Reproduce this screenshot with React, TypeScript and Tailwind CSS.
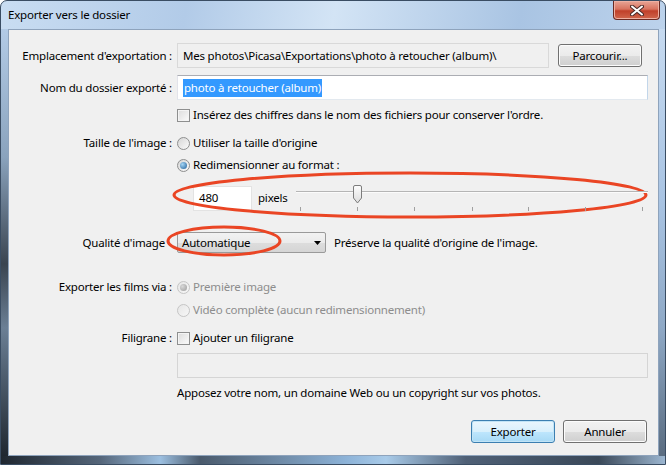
import React from 'react'

const font = "font-['Segoe_UI','Noto_Sans','DejaVu_Sans',sans-serif]"

function Checkbox() {
  return (
    <span className="inline-block w-[13px] h-[13px] border border-[#8e8f8f] bg-[linear-gradient(135deg,#dcdcdc,#fbfbfb)] shadow-[inset_0_0_0_1px_#f4f4f4] shrink-0" />
  )
}

function Radio({ checked, disabled }: { checked?: boolean; disabled?: boolean }) {
  return (
    <span
      className={
        'relative inline-flex items-center justify-center w-[13px] h-[13px] rounded-full border shrink-0 ' +
        (disabled
          ? 'border-[#c5c5c5] bg-[linear-gradient(135deg,#e6e6e6,#f7f7f7)]'
          : 'border-[#8e8f8f] bg-[linear-gradient(135deg,#d6d6d6,#fbfbfb)]')
      }
    >
      {checked && (
        <span
          className={
            'w-[7px] h-[7px] rounded-full ' +
            (disabled
              ? 'bg-[radial-gradient(circle_at_35%_35%,#d8d8d8,#9c9c9c)]'
              : 'bg-[radial-gradient(circle_at_35%_35%,#a5d5f4,#1f5f9a)]')
          }
        />
      )}
    </span>
  )
}

function Row({ label, children, h, mt, labelPad }: { label?: string; children: React.ReactNode; h: number; mt: number; labelPad?: boolean }) {
  return (
    <div className="flex items-center" style={{ height: h, marginTop: mt }}>
      <div className={'w-[163px] text-right whitespace-nowrap ' + (labelPad ? 'pr-[7px]' : '')}>{label}</div>
      <div className="ml-[5px] flex-1 min-w-0 flex items-center h-full">{children}</div>
    </div>
  )
}

function Slider() {
  const ticks = [4, 61, 118, 176, 232, 289, 346]
  return (
    <div className="relative flex-1 h-[26px] ml-[8px]">
      <div className="absolute left-0 right-0 top-[6px] h-[2px] border-t border-[#b5b5b5] bg-[#fbfbfb]" />
      {ticks.map((x) => (
        <div key={x} className="absolute top-[22px] w-px h-[4px] bg-[#a0a0a0]" style={{ left: x }} />
      ))}
      <svg className="absolute left-[56px] top-0" width="11" height="19" viewBox="0 0 11 19">
        <defs>
          <linearGradient id="th" x1="0" x2="0" y1="0" y2="1">
            <stop offset="0" stopColor="#fdfdfd" />
            <stop offset="1" stopColor="#dcdcdc" />
          </linearGradient>
        </defs>
        <path d="M1.5 2 Q1.5 0.5 3 0.5 H8 Q9.5 0.5 9.5 2 V13 L5.5 18 L1.5 13 Z" fill="url(#th)" stroke="#7c7c7c" />
      </svg>
    </div>
  )
}

function Button({ children, focused }: { children: React.ReactNode; focused?: boolean }) {
  return (
    <div
      className={
        'w-[84px] h-[23px] rounded-[3px] border flex items-center justify-center shrink-0 ' +
        (focused
          ? 'border-[#3c7fb1] bg-[linear-gradient(#eaf6fd,#d9f0fc_50%,#bee6fd_51%,#a7d9f5)] shadow-[inset_0_0_0_1px_#c2e4f6]'
          : 'border-[#707070] bg-[linear-gradient(#f2f2f2,#ebebeb_50%,#dddddd_51%,#cfcfcf)] shadow-[inset_0_0_0_1px_#fcfcfc]')
      }
    >
      {children}
    </div>
  )
}

export default function App() {
  return (
    <div className={`w-[666px] h-[465px] ${font} text-[11.5px] tracking-[-0.2px] text-black relative overflow-hidden rounded-t-[7px] border border-[#3a4d63] bg-[linear-gradient(100deg,#c9ddf2,#b2cbe8_25%,#d3e4f5_45%,#a9c4e3_70%,#c6daf0)] flex flex-col`}>
      {/* title bar */}
      <div className="h-[28px] flex items-start justify-between shrink-0">
        <div className="pl-[7px] pt-[6px] text-[11.5px] leading-[16px]">Exporter vers le dossier</div>
        <div className="mr-[5px] w-[47px] h-[19px] rounded-b-[4px] border border-t-0 border-[#6b2a22] bg-[linear-gradient(#e8a596,#d8735f_45%,#c0402a_55%,#d0664c)] shadow-[inset_0_0_0_1px_#eeb0a2] flex items-center justify-center">
          <svg width="14" height="11" viewBox="0 0 14 11">
            <path d="M2 1.5 L12 9.5 M12 1.5 L2 9.5" stroke="#4c2a28" strokeWidth="4" strokeLinecap="round" />
            <path d="M2 1.5 L12 9.5 M12 1.5 L2 9.5" stroke="#ffffff" strokeWidth="2" strokeLinecap="round" />
          </svg>
        </div>
      </div>

      {/* side frames + client */}
      <div className="flex flex-1">
        <div className="w-[7px] bg-[linear-gradient(#b3cbe6,#8aa3bd_30%,#3a4450_55%,#6b7f95_70%,#1f2730)]" />
        <div className="relative w-[651px] h-[427px] border border-[#8ea3bc] bg-[#f0f0f0] pr-[10px]">
          {/* ellipses overlay */}
          <svg className="absolute left-0 top-0 pointer-events-none" width="651" height="427">
            <ellipse cx="401" cy="165" rx="236" ry="22" fill="none" stroke="#ea4524" strokeWidth="3" />
            <ellipse cx="215" cy="211" rx="56" ry="14" fill="none" stroke="#ea4524" strokeWidth="3" />
          </svg>

          <Row label="Emplacement d'exportation :" h={25} mt={13}>
            <div className="w-[372px] h-full border border-[#d9d9d9] bg-[#f0f0f0] flex items-center pl-[5px] whitespace-nowrap overflow-hidden">
              Mes photos\Picasa\Exportations\photo à retoucher (album)\
            </div>
            <div className="ml-[9px]">
              <Button>Parcourir...</Button>
            </div>
          </Row>

          <Row label="Nom du dossier exporté :" h={25} mt={7}>
            <div className="flex-1 h-full border border-[#abadb3] border-r-[#c2d6ea] border-b-[#e3e9ef] border-l-[#e2e3ea] bg-white flex items-center pl-[5px]">
              <span className="bg-[#3399ff] text-white leading-[18px] px-px">photo à retoucher (album)</span>
            </div>
          </Row>

          <Row h={14} mt={8}>
            <Checkbox />
            <span className="ml-[3px] whitespace-nowrap">Insérez des chiffres dans le nom des fichiers pour conserver l'ordre.</span>
          </Row>

          <Row label="Taille de l'image :" h={14} mt={14}>
            <Radio />
            <span className="ml-[3px]">Utiliser la taille d'origine</span>
          </Row>

          <Row h={14} mt={8}>
            <Radio checked />
            <span className="ml-[3px]">Redimensionner au format :</span>
          </Row>

          <Row h={26} mt={13}>
            <div className="ml-[16px] w-[59px] h-[25px] border border-[#e3e3e3] bg-white flex items-center pl-[5px] shrink-0">480</div>
            <span className="ml-[6px]">pixels</span>
            <Slider />
          </Row>

          <Row label="Qualité d'image" h={21} mt={21} labelPad>
            <div className="w-[149px] h-[21px] border border-[#9a9a9a] rounded-[2px] bg-[linear-gradient(#f2f2f2,#ebebeb_50%,#dddddd_51%,#d5d5d5)] flex items-center justify-between pl-[4px] pr-[4px] shrink-0">
              <span>Automatique</span>
              <svg width="7" height="4" viewBox="0 0 7 4"><path d="M0 0 H7 L3.5 4 Z" fill="#000" /></svg>
            </div>
            <span className="ml-[8px] whitespace-nowrap">Préserve la qualité d'origine de l'image.</span>
          </Row>

          <Row label="Exporter les films via :" h={14} mt={27}>
            <Radio checked disabled />
            <span className="ml-[3px] text-[#8d8d8d]">Première image</span>
          </Row>

          <Row h={14} mt={9}>
            <Radio disabled />
            <span className="ml-[3px] text-[#8d8d8d] whitespace-nowrap">Vidéo complète (aucun redimensionnement)</span>
          </Row>

          <Row label="Filigrane :" h={14} mt={14}>
            <Checkbox />
            <span className="ml-[3px]">Ajouter un filigrane</span>
          </Row>

          <Row h={25} mt={8}>
            <div className="flex-1 h-full border border-[#d5d5d5] bg-[#f0f0f0]" />
          </Row>

          <Row h={14} mt={8}>
            <span className="whitespace-nowrap">Apposez votre nom, un domaine Web ou un copyright sur vos photos.</span>
          </Row>

          <div className="flex justify-end gap-[8px] mt-[20px] pr-px">
            <Button focused>Exporter</Button>
            <Button>Annuler</Button>
          </div>
        </div>
        <div className="w-[6px] bg-[linear-gradient(#c6daf0,#a9c4e3_40%,#8fa9c6_70%,#5a6c80)]" />
      </div>
      <div className="h-[8px] bg-[linear-gradient(90deg,#1f2730,#55667a_15%,#9cbfe0_24%,#4a5a6c_30%,#8db3d8_52%,#a9cbe9_58%,#4f6076_70%,#3a4858_90%,#9cb6d0)]" />
    </div>
  )
}
